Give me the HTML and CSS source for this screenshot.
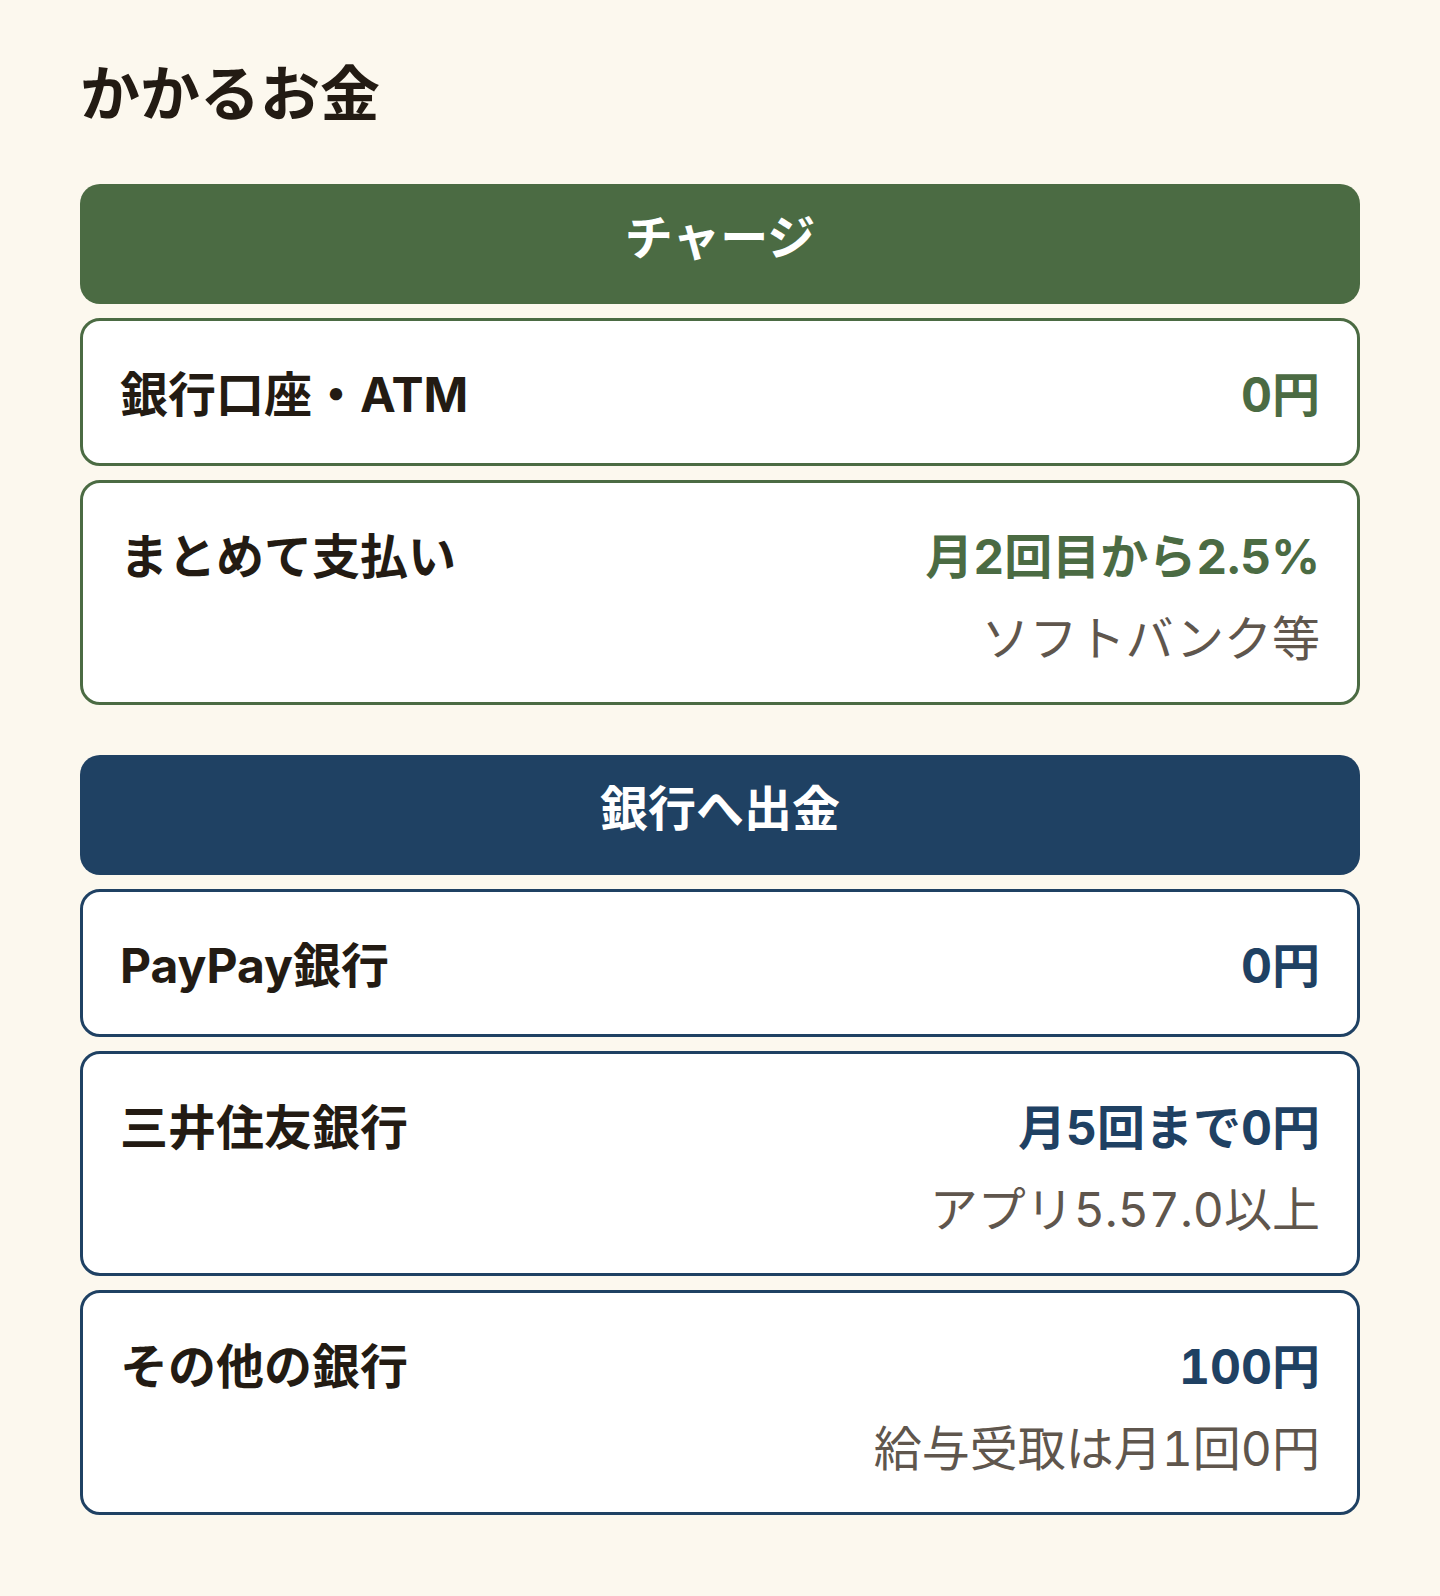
FILE: index.html
```html
<!DOCTYPE html>
<html lang="ja">
<head>
    <meta charset="UTF-8">
    <meta name="viewport" content="width=device-width, initial-scale=1.0">
    <title>かかるお金</title>
    <link rel="stylesheet" href="styles.css">
</head>
<body>
    <h1 class="page-title">かかるお金</h1>

    <div class="fee-groups">
        <section class="fee-group fee-group-charge">
            <h2 class="fee-head">チャージ</h2>
            <div class="fee-card">
                <div class="fee-label">銀行口座・ATM</div>
                <div class="fee-detail">
                    <div class="fee-value">0円</div>
                </div>
            </div>
            <div class="fee-card">
                <div class="fee-label">まとめて支払い</div>
                <div class="fee-detail">
                    <div class="fee-value">月2回目から2.5%</div>
                    <div class="fee-note">ソフトバンク等</div>
                </div>
            </div>
        </section>

        <section class="fee-group fee-group-withdraw">
            <h2 class="fee-head">銀行へ出金</h2>
            <div class="fee-card">
                <div class="fee-label">PayPay銀行</div>
                <div class="fee-detail">
                    <div class="fee-value">0円</div>
                </div>
            </div>
            <div class="fee-card">
                <div class="fee-label">三井住友銀行</div>
                <div class="fee-detail">
                    <div class="fee-value">月5回まで0円</div>
                    <div class="fee-note">アプリ5.57.0以上</div>
                </div>
            </div>
            <div class="fee-card">
                <div class="fee-label">その他の銀行</div>
                <div class="fee-detail">
                    <div class="fee-value">100円</div>
                    <div class="fee-note">給与受取は月1回0円</div>
                </div>
            </div>
        </section>
    </div>
</body>
</html>
```

FILE: styles.css
```css
body {
    font-family: Inter, "Noto Sans CJK JP", sans-serif;
    font-variant-numeric: tabular-nums;
    margin: 0;
    padding: 49px 80px 80px;
    background-color: #fcf8ee;
    color: #231b13;
}

.page-title {
    font-size: 60px;
    font-weight: 700;
    line-height: 1.5;
    margin: 0 0 45px;
}

.fee-groups {
    display: flex;
    flex-direction: column;
    gap: 50px;
}

.fee-group {
    display: flex;
    flex-direction: column;
    gap: 14px;
}

.fee-head {
    margin: 0;
    padding: 18px 24px 30px;
    border-radius: 20px;
    color: #fff;
    font-size: 48px;
    font-weight: 700;
    line-height: 1.5;
    text-align: center;
}

.fee-card {
    display: flex;
    justify-content: space-between;
    align-items: flex-start;
    padding: 38px 37px 32px;
    background-color: #fff;
    border: 3px solid;
    border-radius: 20px;
}

.fee-label {
    font-size: 48px;
    font-weight: 700;
    line-height: 1.5;
}

.fee-detail {
    text-align: right;
}

.fee-value {
    font-size: 48px;
    font-weight: 700;
    line-height: 1.5;
}

.fee-note {
    margin-top: 15px;
    font-size: 48px;
    line-height: 62px;
    color: #5f564d;
}

.fee-group-charge .fee-head {
    background-color: #4b6b43;
}

.fee-group-charge .fee-card {
    border-color: #4b6b43;
}

.fee-group-charge .fee-value {
    color: #4b6b43;
}

.fee-group-withdraw .fee-head {
    background-color: #1f4163;
}

.fee-group-withdraw .fee-card {
    border-color: #1f4163;
}

.fee-group-withdraw .fee-value {
    color: #1f4163;
}
```
